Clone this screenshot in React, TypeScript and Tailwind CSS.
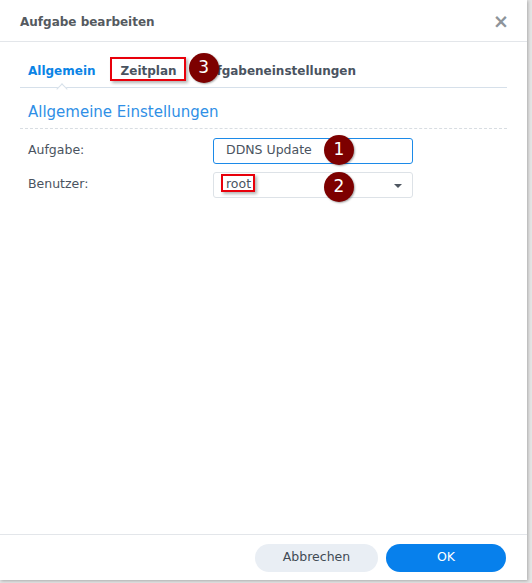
const Badge = ({ n }: { n: number }) => (
  <span className="absolute z-10 flex h-[30px] w-[30px] items-center justify-center rounded-full bg-[#7d0000] text-[17px] font-normal text-white shadow-[1px_1px_2px_rgba(0,0,0,0.35)]">
    {n}
  </span>
);

export default function App() {
  return (
    <div className="h-[583px] w-[532px] bg-[#e4e4e4] font-['DejaVu_Sans',sans-serif]">
      <div className="flex h-[580px] w-[527px] flex-col bg-white shadow-[1px_1px_3px_rgba(0,0,0,0.25)]">
        {/* title bar */}
        <div className="flex h-[42px] items-center justify-between border-b border-[#e3e6ea] pl-[20px] pr-[18px] pt-[2px]">
          <h1 className="text-[12px] font-bold text-[#555a60]">Aufgabe bearbeiten</h1>
          <span className="text-[19px] font-bold leading-none text-[#8e949a]">×</span>
        </div>

        {/* tabs */}
        <div className="mx-[20px] mt-[13px] flex h-[33px] items-center gap-[25px] border-b border-[#d6e0ea] pl-[8px] text-[12px] font-bold">
          <span className="relative text-[#0a84e6]">
            Allgemein
            <span className="absolute left-[30px] top-[23px] h-[8px] w-[8px] rotate-45 border-l border-t border-[#d6e0ea] bg-white" />
          </span>
          <span className="relative text-[#4a5360]">
            <span className="absolute -left-[11px] -top-[5px] h-[24px] w-[76px] border-2 border-[#e8000b] shadow-[2px_2px_3px_rgba(0,0,0,0.3)]" />
            Zeitplan
            <span className="absolute left-[68px] -top-[9px]">
              <Badge n={3} />
            </span>
          </span>
          <span className="-ml-[3px] text-[#4a5360]">Aufgabeneinstellungen</span>
        </div>

        {/* section */}
        <div className="mx-[20px] flex-1">
          <div className="border-b border-dashed border-[#d8dde2] pb-[4px] pl-[8px] pt-[13px] text-[15px] text-[#2f8fe6]">
            Allgemeine Einstellungen
          </div>
          <div className="mt-[9px] flex flex-col gap-[8px] pl-[8px] text-[12.5px] text-[#4a5360]">
            <div className="flex items-center">
              <label className="w-[185px]">Aufgabe:</label>
              <div className="relative flex h-[26px] w-[200px] items-center rounded-[3px] border border-[#1c8ae8] pl-[12px]">
                DDNS Update
                <span className="absolute left-[110px] top-[-4px]">
                  <Badge n={1} />
                </span>
              </div>
            </div>
            <div className="flex items-center">
              <label className="w-[185px]">Benutzer:</label>
              <div className="relative flex h-[26px] w-[200px] items-center rounded-[3px] border border-[#dde2e7] pl-[12px]">
                <span className="relative">
                  <span className="absolute -left-[5px] -top-[1px] h-[18px] w-[34px] border-2 border-[#e8000b] shadow-[2px_2px_3px_rgba(0,0,0,0.3)]" />
                  root
                </span>
                <span className="absolute left-[110px] top-[-1px]">
                  <Badge n={2} />
                </span>
                <span className="absolute right-[10px] top-[11px] h-0 w-0 border-x-[4px] border-t-[4px] border-x-transparent border-t-[#4f5661]" />
              </div>
            </div>
          </div>
        </div>

        {/* footer */}
        <div className="flex h-[46px] items-center justify-end gap-[8px] border-t border-[#e3e6ea] pr-[21px] text-[12.5px]">
          <button className="h-[28px] w-[123px] rounded-full bg-[#e9eef4] text-[#414b55]">Abbrechen</button>
          <button className="h-[28px] w-[120px] rounded-full bg-[#0780ec] text-white">OK</button>
        </div>
      </div>
    </div>
  );
}
